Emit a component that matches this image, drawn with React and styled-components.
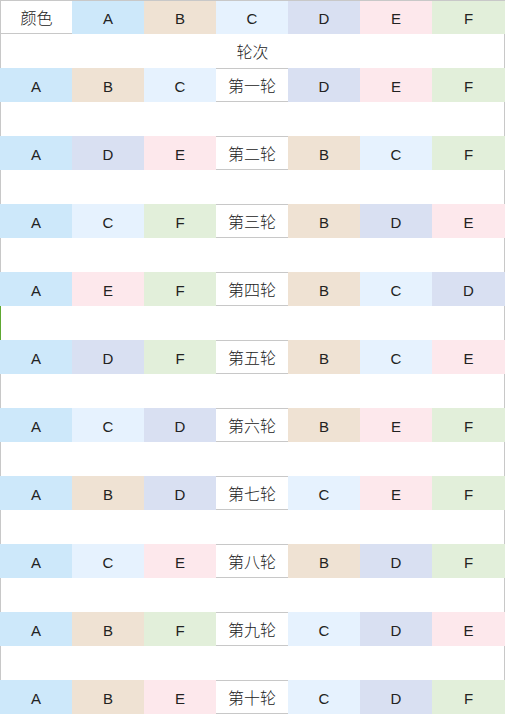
import React from "react";
import styled, { createGlobalStyle } from "styled-components";

const GlobalStyle = createGlobalStyle`
  html, body {
    margin: 0;
    padding: 0;
    background: #fff;
  }
  body {
    font-family: "Liberation Sans", "Noto Sans CJK SC", sans-serif;
    color: #222;
  }
`;

const colors = {
  A: "#cde8fa",
  B: "#efe2d3",
  C: "#e6f2fe",
  D: "#d9e0f2",
  E: "#fde8ec",
  F: "#e2efda",
};

const rounds = [
  ["第一轮", "ABC", "DEF"],
  ["第二轮", "ADE", "BCF"],
  ["第三轮", "ACF", "BDE"],
  ["第四轮", "AEF", "BCD"],
  ["第五轮", "ADF", "BCE"],
  ["第六轮", "ACD", "BEF"],
  ["第七轮", "ABD", "CEF"],
  ["第八轮", "ACE", "BDF"],
  ["第九轮", "ABF", "CDE"],
  ["第十轮", "ABE", "CDF"],
];

const Sheet = styled.div`
  width: 505px;
  border-top: 1px solid #c8c8c8;
`;

const Row = styled.div`
  display: grid;
  grid-template-columns: repeat(6, 72px) 73px;
  height: ${(p) => (p.first ? "33px" : "34px")};
`;

const Cell = styled.div`
  display: flex;
  align-items: center;
  justify-content: center;
  box-sizing: border-box;
  padding-top: 2px;
  font-size: 15px;
  background: ${(p) => p.bg || "#fff"};
`;

const LabelCell = styled(Cell)`
  border-left: 1px solid #c8c8c8;
  border-bottom: 1px solid #c8c8c8;
  font-family: "Noto Sans CJK SC", sans-serif;
  font-size: 16px;
  font-weight: 300;
  padding-top: 0;
`;

const RoundCell = styled(Cell)`
  border-top: 1px solid #c8c8c8;
  border-bottom: 1px solid #c8c8c8;
  font-family: "Noto Sans CJK SC", sans-serif;
  font-size: 16px;
  font-weight: 300;
  padding-top: 0;
`;

const Blank = styled.div`
  height: 34px;
  box-sizing: border-box;
  border-left: 1px solid ${(p) => (p.marked ? "#5ea832" : "#c8c8c8")};
  border-right: 1px solid #c8c8c8;
  display: flex;
  align-items: center;
  justify-content: center;
  font-family: "Noto Sans CJK SC", sans-serif;
  font-size: 16px;
  font-weight: 300;
`;

const Letters = ({ list }) =>
  list.split("").map((l) => (
    <Cell key={l} bg={colors[l]}>
      {l}
    </Cell>
  ));

export default function App() {
  return (
    <>
      <GlobalStyle />
      <Sheet>
        <Row first>
          <LabelCell>颜色</LabelCell>
          <Letters list="ABCDEF" />
        </Row>
        <Blank>轮次</Blank>
        {rounds.map(([name, left, right], i) => (
          <React.Fragment key={name}>
            <Row>
              <Letters list={left} />
              <RoundCell>{name}</RoundCell>
              <Letters list={right} />
            </Row>
            {i < rounds.length - 1 && <Blank marked={i === 3} />}
          </React.Fragment>
        ))}
      </Sheet>
    </>
  );
}
